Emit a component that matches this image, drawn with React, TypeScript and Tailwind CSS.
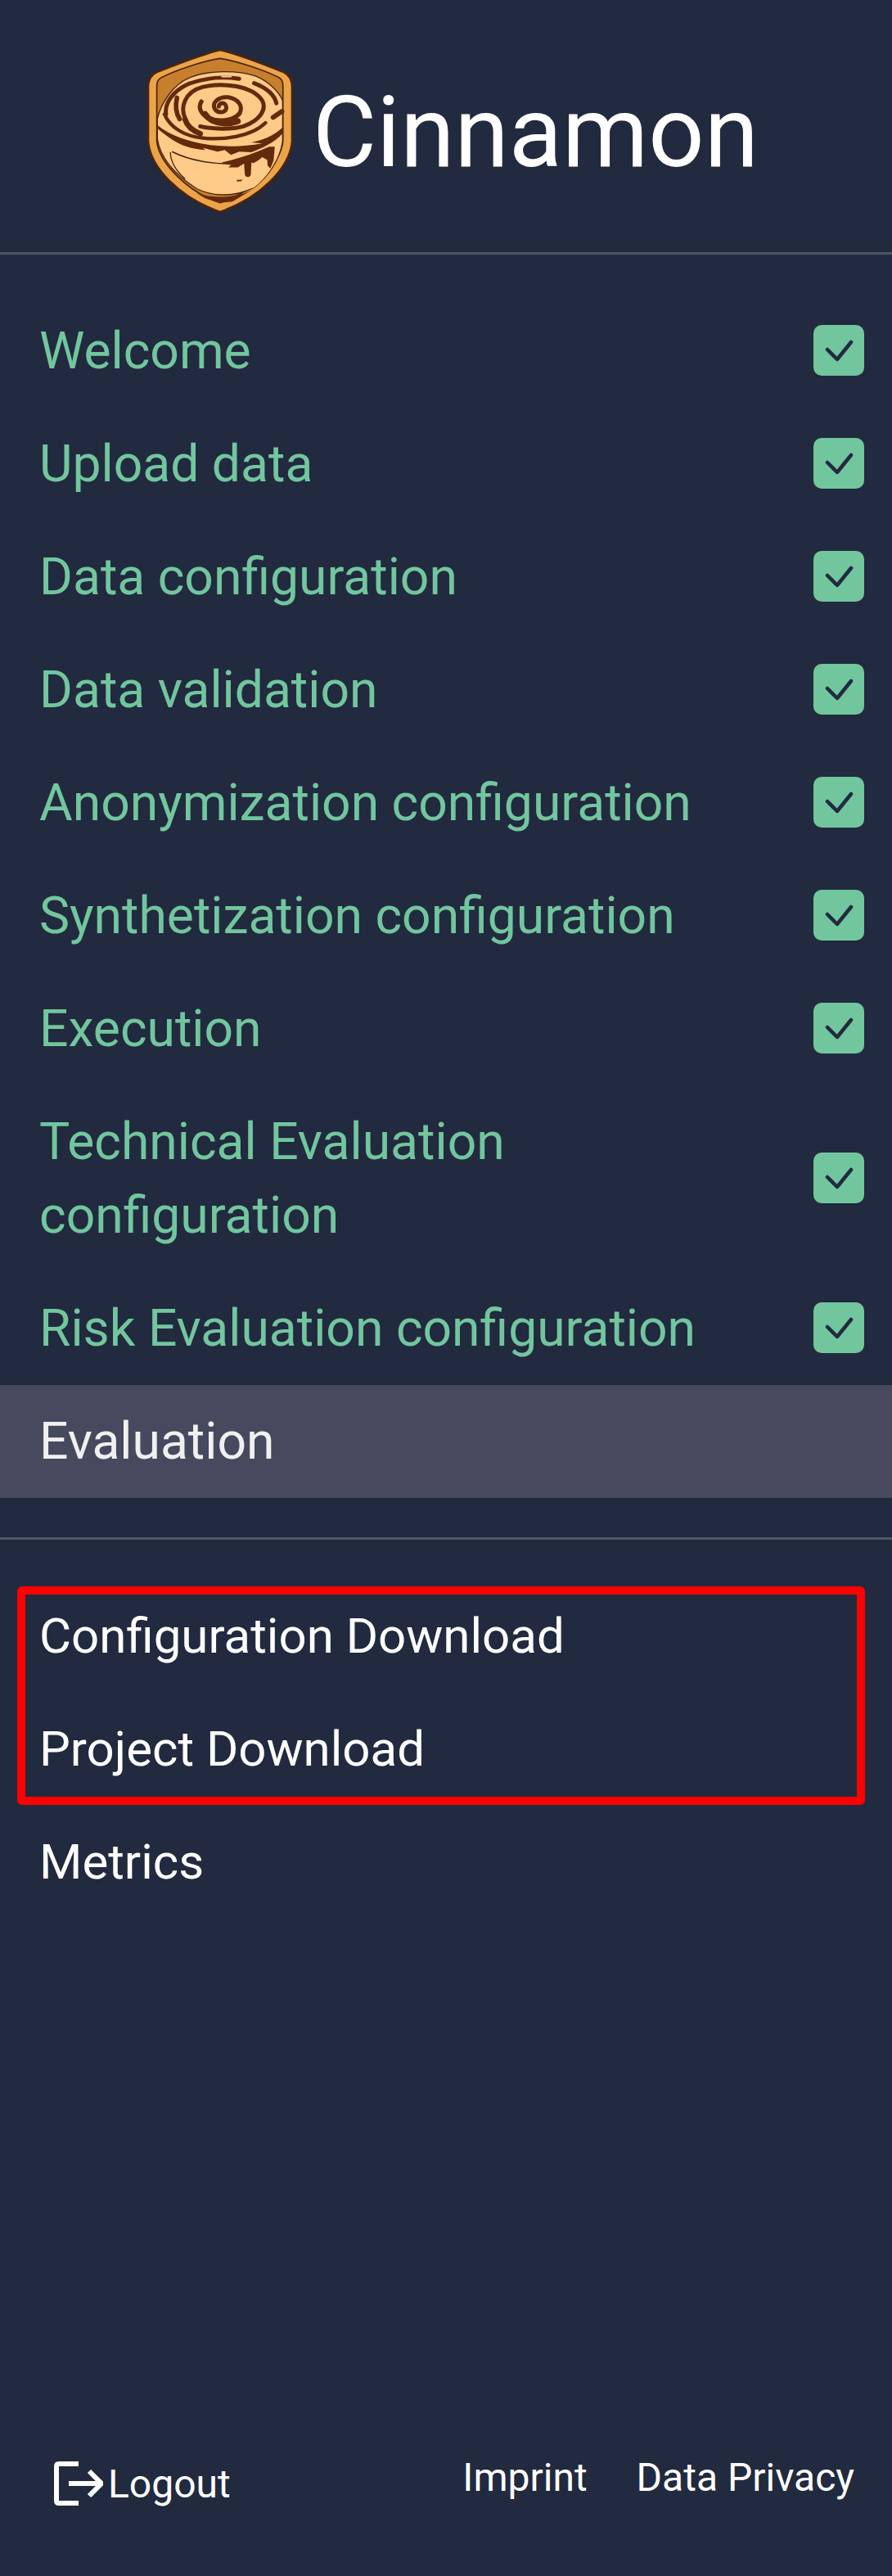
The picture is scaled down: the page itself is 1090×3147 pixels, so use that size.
import React from 'react';

const steps = [
  'Welcome',
  'Upload data',
  'Data configuration',
  'Data validation',
  'Anonymization configuration',
  'Synthetization configuration',
  'Execution',
  'Technical Evaluation configuration',
  'Risk Evaluation configuration',
];

function Logo() {
  const dark = '#4a2412';
  const icing = '#65290c';
  const dough = '#fdcb87';
  return (
    <svg viewBox="84 58 542 608" className="w-[180px] h-[202px] shrink-0">
      {/* shield */}
      <path
        d="M355 64 C400 74 500 110 590 146 C610 156 620 175 620 200 L620 400 C612 500 500 610 355 660 C210 610 98 500 90 400 L90 200 C90 175 100 156 120 146 C210 110 310 74 355 64 Z"
        fill="#eba447"
        stroke={dark}
        strokeWidth="8"
      />
      <path
        d="M355 95 C420 105 520 140 570 165 C580 170 586 180 586 195 L586 400 C578 480 470 590 355 626 C240 590 130 480 122 400 L122 195 C122 180 130 170 140 165 C190 140 290 105 355 95 Z"
        fill="#c77f2e"
        stroke={dark}
        strokeWidth="5"
      />
      {/* bun */}
      <path
        d="M124 318 C135 265 180 190 245 165 C310 138 420 138 485 160 C530 178 570 215 585 250 L585 400 C575 470 530 530 480 570 C400 610 320 600 270 575 C200 530 135 470 124 390 Z"
        fill={dough}
        stroke={dark}
        strokeWidth="4"
      />
      {/* band under the top swirl */}
      <path
        d="M124 352 C175 395 215 425 300 432 L292 424 L345 438 L372 432 L395 450 L425 438 L470 440 C510 425 555 405 584 372 L584 350 C545 385 510 395 470 404 L510 408 C450 420 380 420 330 415 C250 405 170 380 124 340 Z"
        fill={icing}
      />
      {/* side face */}
      <path
        d="M160 418 C170 425 178 430 182 440 C250 475 350 492 440 482 L520 470 L560 408 L575 400 L575 425 C560 480 530 530 480 570 C400 600 320 590 270 565 C225 530 185 490 170 460 Z"
        fill={dough}
      />
      <path d="M178 438 C240 470 340 490 440 480" fill="none" stroke={dark} strokeWidth="5" />
      <path d="M172 440 C172 475 195 510 226 538" fill="none" stroke={dark} strokeWidth="4" />
      {/* icing running down the right side */}
      <path
        d="M360 478 C400 470 470 450 535 420 L556 420 L552 470 L540 500 L530 490 L528 468 L510 458 L496 470 L478 480 L470 478 L468 522 C466 534 448 534 446 522 L443 482 L420 496 L385 496 L395 488 Z"
        fill={icing}
      />
      <path d="M415 542 L438 541 L432 547 L418 548 Z" fill={icing} />
      <path d="M268 590 C330 612 400 610 470 580 L400 622 L355 626 L300 610 Z" fill={icing} />
      {/* spiral */}
      <g fill="none" stroke={icing} strokeLinecap="round" strokeLinejoin="round">
        <path
          d="M350 272 C352 254 378 256 378 276 C376 296 346 298 336 282 C322 258 350 234 385 238 C420 244 442 270 426 298"
          strokeWidth="15"
        />
        <path d="M426 298 C404 324 350 332 306 312 C286 298 272 276 286 254" strokeWidth="16" />
        <path d="M300 300 C318 330 370 344 420 326" strokeWidth="22" />
        <path
          d="M228 320 C206 275 224 218 292 200 C360 184 470 192 510 250 C528 285 498 325 440 345 C395 358 325 355 282 345"
          strokeWidth="15"
        />
        <path d="M226 320 C234 345 255 362 282 372" strokeWidth="20" />
        <path d="M156 300 C150 262 178 216 240 188 C300 166 370 162 425 170" strokeWidth="15" />
        <path d="M480 186 C530 205 556 232 562 260" strokeWidth="15" />
        <path d="M196 240 C190 268 192 296 206 318" strokeWidth="17" />
        <path d="M150 300 C170 350 226 382 292 388 C360 396 470 384 522 332" strokeWidth="13" />
        <path d="M550 312 L582 290" strokeWidth="18" />
        <path d="M362 162 L395 162" stroke={dough} strokeWidth="6" />
      </g>
    </svg>
  );
}

function CheckBox() {
  return (
    <div className="w-[62px] h-[62px] shrink-0 mb-[2px] rounded-[10px] bg-[#72c69e]">
      <svg viewBox="0 0 62 62" className="w-[62px] h-[62px]" fill="none" stroke="#222a3f" strokeWidth="4.5" strokeLinecap="round" strokeLinejoin="round">
        <path d="M17 30 L29 42 L46 21" />
      </svg>
    </div>
  );
}

export default function App() {
  return (
    <div className="w-[1090px] h-[3147px] bg-[#222a3f] flex flex-col text-[60px] leading-[90px] font-['Roboto',sans-serif] text-white">
      {/* Logo header */}
      <div className="h-[311px] shrink-0 border-b-[3px] border-[#4f5668] flex items-center gap-[23px] pl-[179px] pt-[12px]">
        <Logo />
        <span className="text-[120px] leading-[180px] pt-[4px]">Cinnamon</span>
      </div>

      {/* Steps */}
      <div className="pt-[49px] flex flex-col text-[62.4px]">
        {steps.map((step) => (
          <div key={step} className="flex items-center justify-between pl-[48px] pr-[34px] py-[24px] text-[#72c69e]">
            <span className="max-w-[860px]">{step}</span>
            <CheckBox />
          </div>
        ))}
        <div className="px-[48px] py-[24px] bg-[#474a5e] text-[#f0f0f0]">Evaluation</div>
      </div>

      <div className="mt-[48px] border-t-[3px] border-[#4f5668]" />

      {/* Downloads */}
      <div className="pt-[49px] flex flex-col relative">
        <div className="absolute left-[21px] top-[57px] w-[1036px] h-[267px] border-[10px] border-[#ff0000] rounded-[6px]" />
        <div className="px-[48px] py-[24px]">Configuration Download</div>
        <div className="px-[48px] py-[24px]">Project Download</div>
        <div className="px-[48px] py-[24px]">Metrics</div>
      </div>

      {/* Footer */}
      <div className="mt-auto mb-[68px] flex items-center justify-between pl-[66px] pr-[46px] text-[48px] leading-[72px]">
        <div className="flex items-center gap-[6px]">
          <svg viewBox="0 0 60 54" className="w-[60px] h-[54px] mb-[2px]" fill="none" stroke="white" strokeWidth="6">
            <path d="M30 3 H6 Q3 3 3 6 V48 Q3 51 6 51 H30" />
            <path d="M18 27 H58 M43 12 L58 27 L43 42" />
          </svg>
          <span>Logout</span>
        </div>
        <div className="flex gap-[60px] pb-[16px]">
          <span>Imprint</span>
          <span>Data Privacy</span>
        </div>
      </div>
    </div>
  );
}
